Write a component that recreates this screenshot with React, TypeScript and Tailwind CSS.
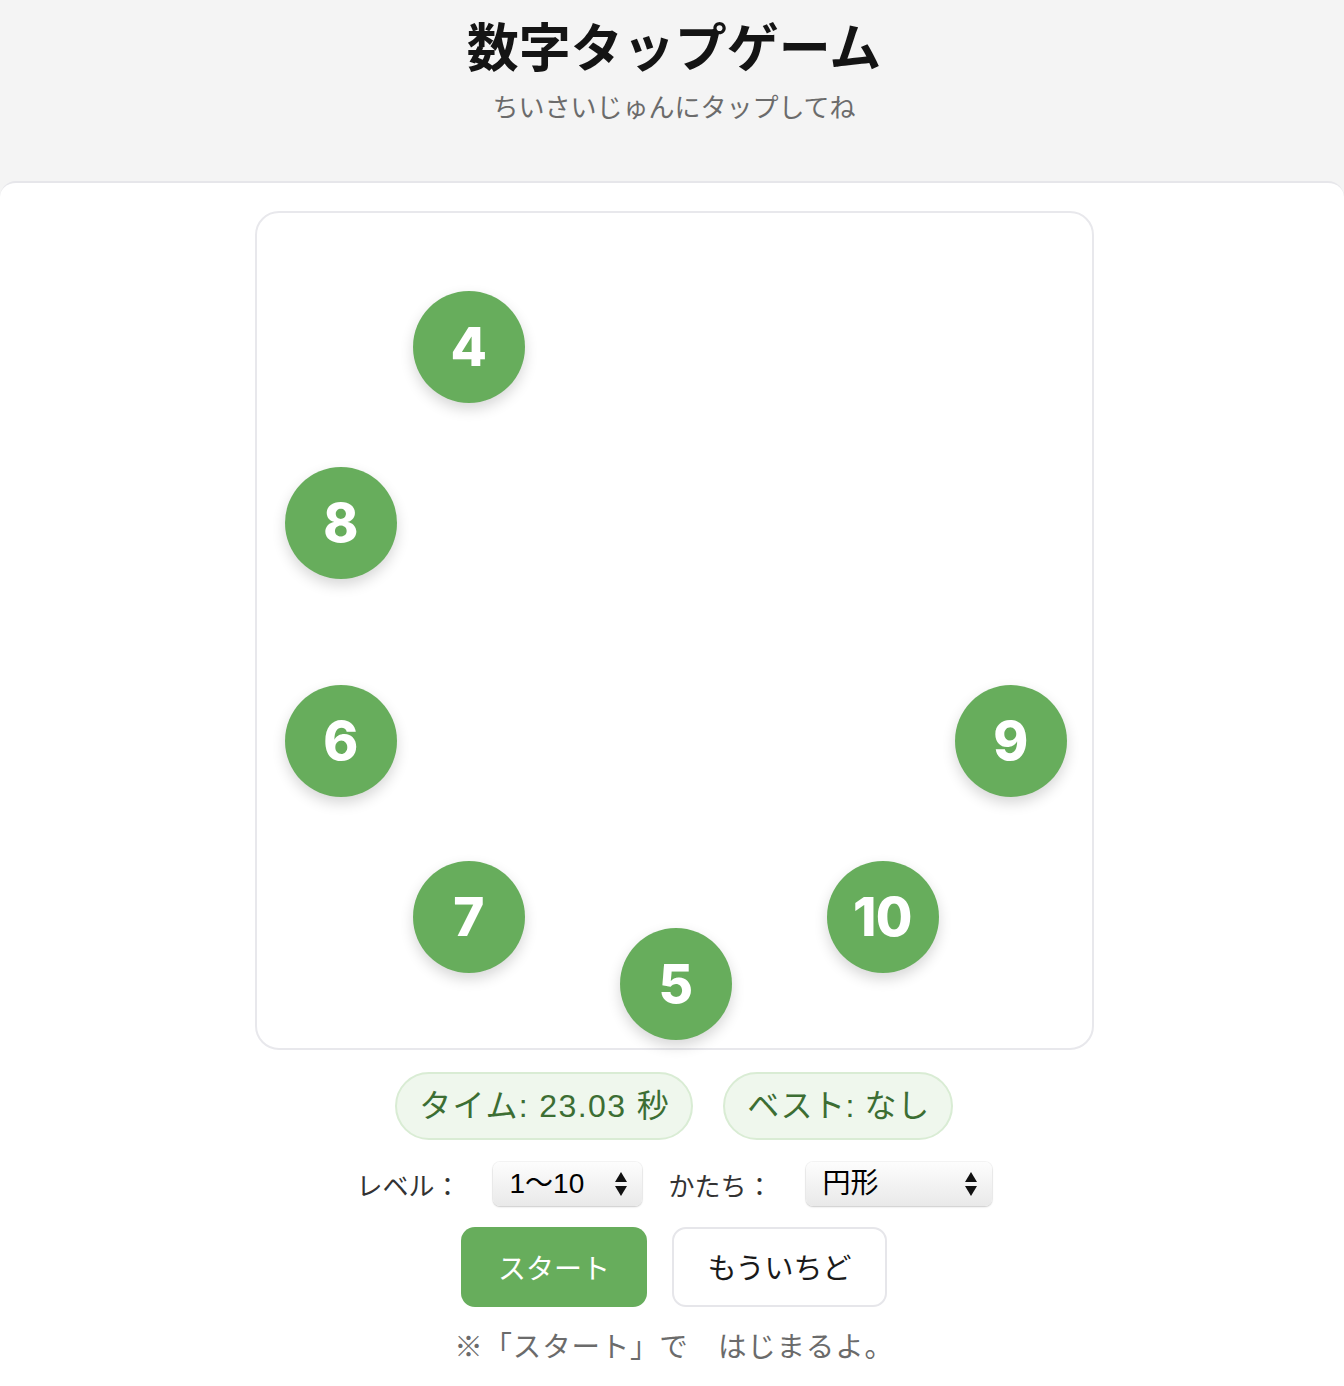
import React from "react";

const nodes = [
  { n: 4, x: 214, y: 136 },
  { n: 8, x: 86, y: 312 },
  { n: 6, x: 86, y: 530 },
  { n: 9, x: 756, y: 530 },
  { n: 7, x: 214, y: 706 },
  { n: 10, x: 628, y: 706 },
  { n: 5, x: 421, y: 773 },
];

const latin = '"Liberation Sans", "Noto Sans CJK JP", sans-serif';

function Arrows() {
  return (
    <svg width="14" height="26" viewBox="0 0 14 26" className="shrink-0">
      <path d="M7 1 L13 11 L1 11 Z" fill="#111" />
      <path d="M7 25 L13 15 L1 15 Z" fill="#111" />
    </svg>
  );
}

function FakeSelect({ label, width }: { label: string; width: string }) {
  return (
    <div
      className={`${width} h-[44px] flex items-center justify-between pl-[17px] pr-[14px] rounded-[7px] bg-gradient-to-b from-[#fdfdfd] to-[#e9e9e9] shadow-[0_0_0_1px_rgba(0,0,0,0.04),0_1px_2px_rgba(0,0,0,0.18)] text-[28px] text-black leading-none`}
      style={{ fontFamily: latin }}
    >
      <span>{label}</span>
      <Arrows />
    </div>
  );
}

export default function App() {
  return (
    <div
      className="min-h-[1386px] bg-[#f4f4f4] flex flex-col"
      style={{ fontFamily: '"Noto Sans CJK JP", "Noto Sans", sans-serif' }}
    >
      <header className="h-[181px] flex flex-col items-center pt-[11px] pl-[4px]">
        <h1 className="text-[52px] font-bold text-[#141414] leading-[68px]">
          数字タップゲーム
        </h1>
        <p className="mt-[10px] text-[26px] text-[#6b6b6b] leading-[34px]">
          ちいさいじゅんにタップしてね
        </p>
      </header>
      <main className="flex-1 bg-white rounded-t-[16px] border-t-2 border-[#e6e6ea] flex flex-col items-center pt-[28px] pl-[4px]">
        <div className="relative w-[839px] h-[839px] rounded-[24px] border-2 border-[#e8e8ec] bg-white">
          {nodes.map((d) => (
            <div
              key={d.n}
              className="absolute w-[112px] h-[112px] rounded-full bg-[#67ad5c] flex items-center justify-center text-white shadow-[0_6px_14px_rgba(0,0,0,0.16)]"
              style={{ left: d.x - 56 - 2, top: d.y - 56 - 2 }}
            >
              <span
                className="text-[53px] font-extrabold leading-none tracking-[-0.5px]"
                style={{ fontFamily: 'Inter, "Liberation Sans", sans-serif' }}
              >
                {d.n}
              </span>
            </div>
          ))}
        </div>

        <div className="mt-[22px] flex gap-[30px]" style={{ fontFamily: latin }}>
          <div className="h-[68px] pl-[22px] pr-[21px] flex items-center rounded-full bg-[#eff7ed] border-2 border-[#d9ecd4] text-[#3c6e33] text-[32px] leading-none tracking-[1.4px]">
            タイム: 23.03 秒
          </div>
          <div className="h-[68px] pl-[22px] pr-[21px] flex items-center rounded-full bg-[#eff7ed] border-2 border-[#d9ecd4] text-[#3c6e33] text-[32px] leading-none tracking-[0.6px]">
            ベスト: なし
          </div>
        </div>

        <div className="mt-[22px] flex items-center text-[26px] text-[#333]">
          <span className="mr-[32px]">レベル：</span>
          <FakeSelect label="1〜10" width="w-[149px]" />
          <span className="ml-[27px] mr-[33px]">かたち：</span>
          <FakeSelect label="円形" width="w-[186px]" />
        </div>

        <div className="mt-[21px] flex gap-[25px]">
          <button className="w-[186px] h-[80px] rounded-[14px] bg-[#67ad5c] text-white text-[28px]">
            スタート
          </button>
          <button className="w-[215px] h-[80px] rounded-[14px] bg-white border-2 border-[#e6e6ea] text-[#1a1a1a] text-[29px]">
            もういちど
          </button>
        </div>

        <p className="mt-[19px] text-[28.5px] text-[#6b6b6b] leading-[38px] tracking-[0.8px]">
          <span className="font-bold">※</span>「スタート」で　はじまるよ。
        </p>
      </main>
    </div>
  );
}
